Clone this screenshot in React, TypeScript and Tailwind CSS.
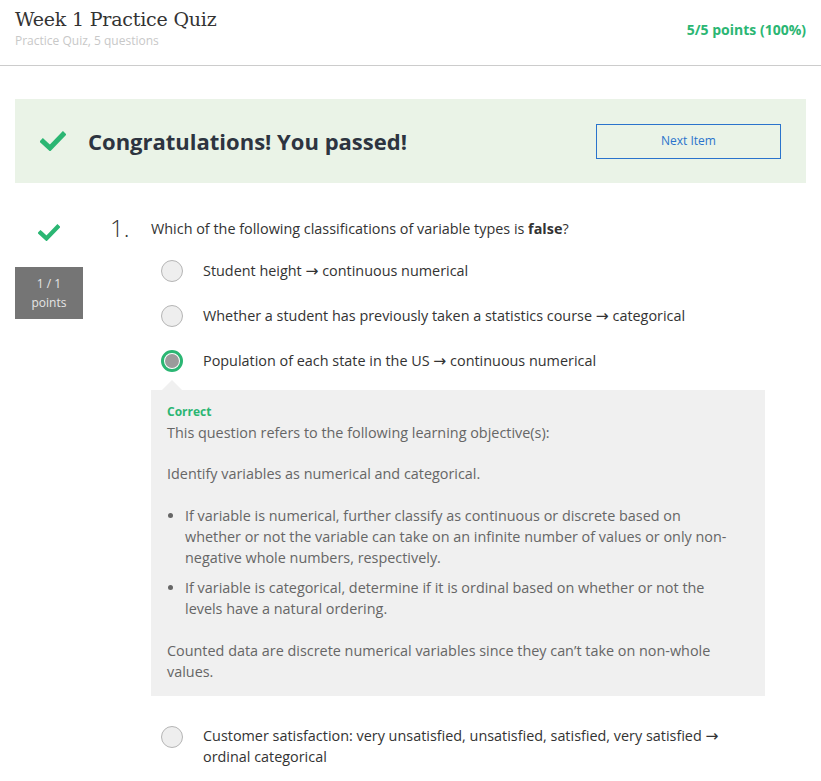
import React from "react";

interface Opcion {
  texto: React.ReactNode;
  seleccionada?: boolean;
}

const Flecha = () => <span className="font-['DejaVu_Sans',sans-serif] text-[15.5px] leading-none">→</span>;

const opciones: Opcion[] = [
  { texto: <>Student height <Flecha /> continuous numerical</> },
  { texto: <>Whether a student has previously taken a statistics course <Flecha /> categorical</> },
  { texto: <>Population of each state in the US <Flecha /> continuous numerical</>, seleccionada: true },
];

const Check = ({ className }: { className?: string }) => (
  <svg viewBox="0 0 26 20" className={className} fill="none">
    <path d="M3 10.5 L10 17 L23 3.5" stroke="#2bb673" strokeWidth="5" strokeLinecap="square" />
  </svg>
);

const Radio = ({ activo }: { activo?: boolean }) =>
  activo ? (
    <span className="w-[22px] h-[22px] rounded-full border-[3px] border-[#2bb673] bg-white flex items-center justify-center shrink-0">
      <span className="w-[14px] h-[14px] rounded-full bg-[#9b9b9b]" />
    </span>
  ) : (
    <span className="w-[22px] h-[22px] rounded-full border border-[#b5b5b5] bg-[#eeeeee] shrink-0" />
  );

const App: React.FC = () => {
  return (
    <div className="w-[821px] min-h-[781px] bg-white text-[#333] font-['Open_Sans',sans-serif]">
      {/* Cabecera */}
      <div className="h-[66px] border-b border-[#cccccc] px-[15px] flex justify-between">
        <div className="pt-[5px]">
          <h1 className="font-['DejaVu_Serif',serif] text-[19px] leading-[28px] text-[#333] tracking-[-0.2px]">
            Week 1 Practice Quiz
          </h1>
          <p className="text-[12px] leading-[16px] text-[#c8c8c8]">Practice Quiz, 5 questions</p>
        </div>
        <div className="pt-[19px] text-[14px] font-bold text-[#2bb673]">5/5 points (100%)</div>
      </div>

      <div className="px-[15px]">
        {/* Banner */}
        <div className="mt-[33px] h-[84px] bg-[#eaf3e7] flex items-center pl-[25px] pr-[25px]">
          <Check className="w-[26px] h-[20px]" />
          <h2 className="ml-[22px] text-[22px] font-bold text-[#2d3440] flex-1">Congratulations! You passed!</h2>
          <button className="w-[185px] h-[35px] border border-[#2a73cc] text-[12px] text-[#2a73cc]">
            Next Item
          </button>
        </div>

        {/* Pregunta */}
        <div className="flex mt-[27px]">
          <div className="w-[68px] flex flex-col items-center">
            <Check className="w-[22px] h-[17px] mt-[14px]" />
            <div className="mt-[26px] w-[68px] h-[52px] bg-[#757575] text-[#e6e6e6] text-[12px] leading-[19px] flex flex-col items-center justify-center">
              <span>1 / 1</span>
              <span>points</span>
            </div>
          </div>
          <div className="ml-[27px] w-[41px] text-[24px] font-light text-[#333] leading-[32px] pt-[2px]">1.</div>
          <div className="w-[614px] text-[14.4px]">
            <p className="leading-[20px] mt-[9px]">
              Which of the following classifications of variable types is <b>false</b>?
            </p>
            <div className="mt-[21px] flex flex-col gap-[23px]">
              {opciones.map((op, i) => (
                <div key={i} className="flex items-center pl-[10px] h-[22px]">
                  <Radio activo={op.seleccionada} />
                  <span className="ml-[20px] leading-[20px]">{op.texto}</span>
                </div>
              ))}
            </div>

            {/* Retroalimentación */}
            <div className="relative mt-[18px] bg-[#f0f0f0] pl-[16px] pr-[24px] pt-[14px] pb-[14px] leading-[21px] text-[#666]">
              <span className="absolute -top-[10px] left-[11px] w-0 h-0 border-l-[10px] border-r-[10px] border-b-[10px] border-l-transparent border-r-transparent border-b-[#f0f0f0]" />
              <div className="text-[12px] font-bold text-[#2bb673] leading-[16px]">Correct</div>
              <p className="mt-[2px]">This question refers to the following learning objective(s):</p>
              <p className="mt-[20px]">Identify variables as numerical and categorical.</p>
              <ul className="mt-[21px] pl-[18px] pr-[8px] list-disc marker:text-[#666] flex flex-col gap-[9px]">
                <li>
                  If variable is numerical, further classify as continuous or discrete based on whether or not the
                  variable can take on an infinite number of values or only non-negative whole numbers, respectively.
                </li>
                <li>
                  If variable is categorical, determine if it is ordinal based on whether or not the levels have a
                  natural ordering.
                </li>
              </ul>
              <p className="mt-[21px]">
                Counted data are discrete numerical variables since they can’t take on non-whole values.
              </p>
            </div>

            <div className="mt-[30px] flex items-start pl-[10px]">
              <Radio />
              <span className="ml-[20px] leading-[21px] -mt-[1px] pr-[40px]">
                Customer satisfaction: very unsatisfied, unsatisfied, satisfied, very satisfied <Flecha /> ordinal
                categorical
              </span>
            </div>
          </div>
        </div>
      </div>
    </div>
  );
};

export default App;
